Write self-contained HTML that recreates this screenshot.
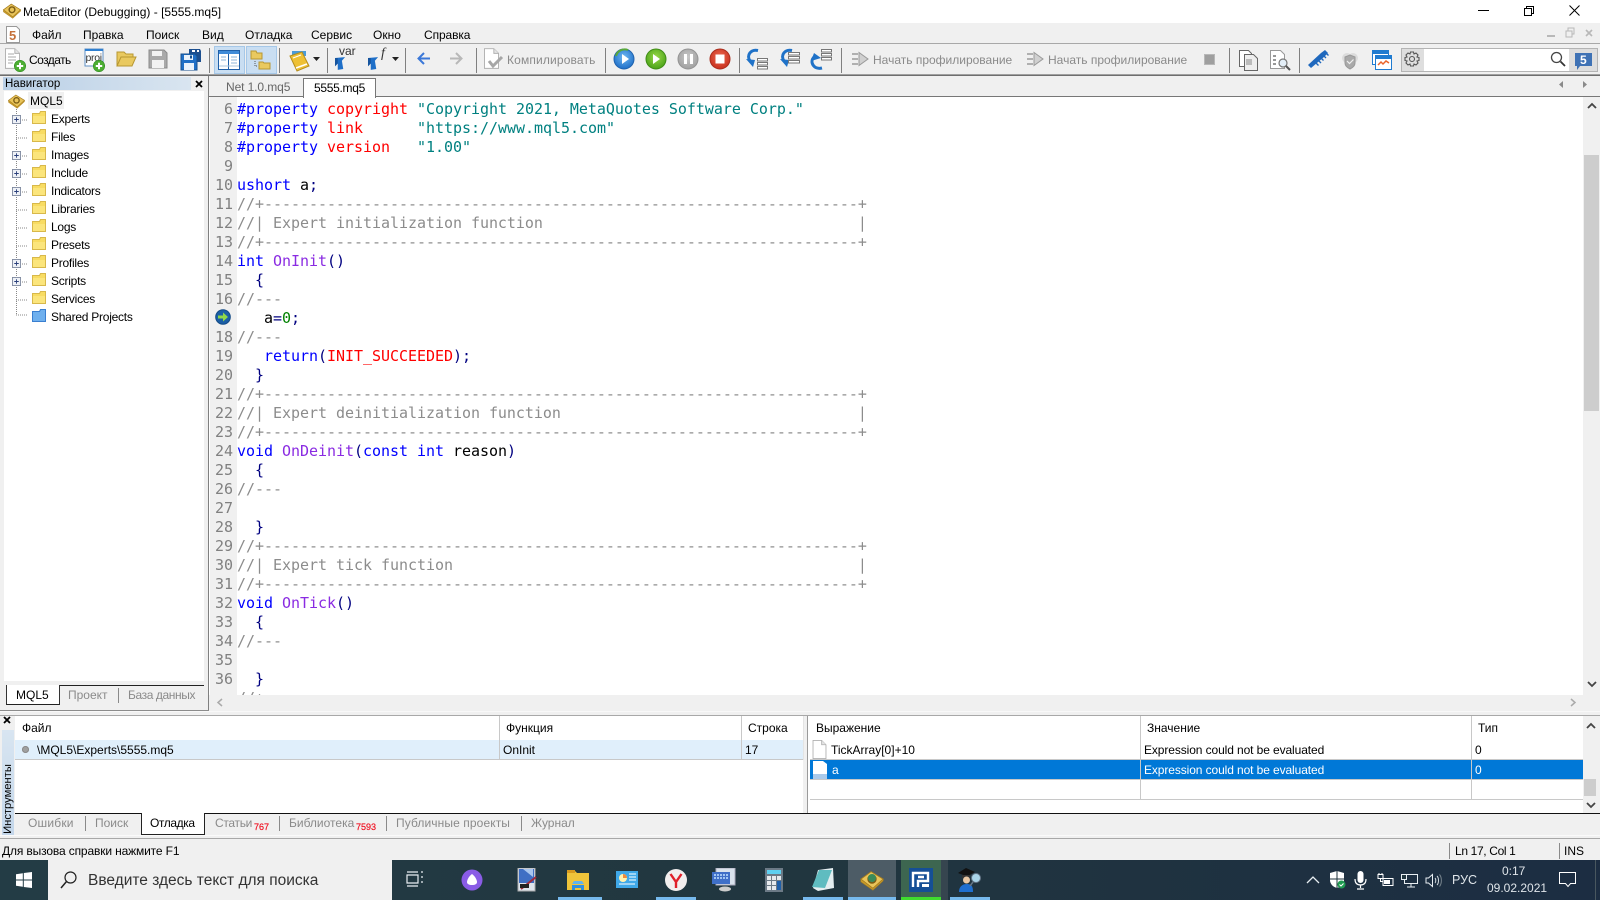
<!DOCTYPE html>
<html lang="ru"><head><meta charset="utf-8"><title>MetaEditor</title>
<style>
html,body{margin:0;padding:0;width:1600px;height:900px;overflow:hidden;background:#f0f0f0}
body{font-family:"Liberation Sans","DejaVu Sans",sans-serif;font-size:12px;color:#000;position:relative}
.a,.t,svg.i{position:absolute}
.t{white-space:pre;line-height:16px;height:16px}
.g{color:#8a8a8a}
.tr{letter-spacing:-.25px}
.sep{position:absolute;width:1px;top:48px;height:25px;background:#808080}
.vs{position:absolute;width:1px;height:15px;background:#8a8a8a}
pre{margin:0;font-family:"DejaVu Sans Mono",monospace;font-size:15px;line-height:19px;position:absolute}
.b{color:#0000ff}.r{color:#ff0000}.s{color:#008080}.c{color:#8c8c8c}.p{color:#8a2be2}.n{color:#000080}.z{color:#008000}
.w{color:#fff}
.tb{color:#dfe5ea;font-size:15.5px}
.red{font-size:9px;color:#f01020;-webkit-text-stroke:.2px #f01020}
</style></head><body>
<svg width="0" height="0" style="position:absolute"><defs>
<symbol id="fd" viewBox="0 0 14 13"><path d="M.5 12.500V2.500h7l1-2h5v12z" fill="#f8dc62" stroke="#d8b84a"/><path d="M1 5h12v7H1z" fill="#fbe57c"/></symbol>
<symbol id="pl" viewBox="0 0 10 10"><rect x=".5" y=".5" width="9" height="9" fill="#eef1f6" stroke="#7f8aa0"/><path d="M2.5 5h5M5 2.5v5" stroke="#2a3f7a" stroke-width="1"/></symbol>
<symbol id="plus" viewBox="0 0 12 12"><circle cx="6" cy="6" r="5.7" fill="#4cae32" stroke="#2d8a1f" stroke-width=".6"/><path d="M2.8 6h6.4M6 2.8v6.4" stroke="#fff" stroke-width="2"/></symbol>
<symbol id="doc" viewBox="0 0 16 22"><path d="M.5.5h10l5 5v16H.5z" fill="#fff" stroke="#b0b0b0"/><path d="M10.5.5v5h5" fill="#e4e4e4" stroke="#b0b0b0"/></symbol>
<symbol id="prf" viewBox="0 0 17 16"><path d="M0 3h6M0 8h6M0 13h6" stroke="#9a9a9a" stroke-width="1.4"/><path d="M7 1.5v13L16 8z" fill="#d0d0d0" stroke="#9a9a9a"/></symbol>
<symbol id="bk" viewBox="0 0 28 24"><path d="M2 11 13 3l13 8-11 10z" fill="#e9c45a" stroke="#a47c1e"/><path d="M2 11v3l13 9 11-10v-2L15 21z" fill="#c79a2a" stroke="#a47c1e" stroke-width=".6"/><circle cx="14" cy="11" r="4" fill="none" stroke="#7a5c14" stroke-width="2"/></symbol>
<symbol id="ar" viewBox="0 0 12 14"><path d="M0 1 11 0 7.500 4 9 13 3 14V7L0 10z" fill="#1e6fc8"/><path d="M0 1 3 1V14L3 7 0 10z" fill="#15549e"/></symbol>
<radialGradient id="gb" cx=".5" cy=".4" r=".6"><stop offset="0" stop-color="#6fb8f2"/><stop offset="1" stop-color="#1f6fc8"/></radialGradient>
<radialGradient id="gg" cx=".5" cy=".4" r=".6"><stop offset="0" stop-color="#9ad84a"/><stop offset="1" stop-color="#4aa318"/></radialGradient>
<radialGradient id="gs" cx=".5" cy=".4" r=".6"><stop offset="0" stop-color="#c8c8c8"/><stop offset="1" stop-color="#a0a0a0"/></radialGradient>
<radialGradient id="gr" cx=".5" cy=".4" r=".6"><stop offset="0" stop-color="#ec6a50"/><stop offset="1" stop-color="#c8301e"/></radialGradient>
</defs></svg>

<!-- title bar -->
<div class="a" style="left:0;top:0;width:1600px;height:23px;background:#fff"></div>
<svg class="i" style="left:2px;top:1px" width="20" height="19"><use href="#bk" width="20" height="19"/></svg>
<div class="t" style="left:23px;top:4px;font-size:12px">MetaEditor (Debugging) - [5555.mq5]</div>
<svg class="i" style="left:1478px;top:5px" width="110" height="12"><path d="M0 5.5h11" stroke="#000"/><path d="M46.5 3.5h7v7h-7zM48.5 3.5V1.5h7v7h-2" fill="none" stroke="#000"/><path d="M91.5 .5l10 10M101.5 .5l-10 10" stroke="#000"/></svg>

<!-- menu -->
<div class="a" style="left:0;top:23px;width:1600px;height:20px;background:#f0f0f0"></div>
<svg class="i" style="left:6px;top:26px" width="14" height="17"><path d="M.5.5h10l3 3v13H.5z" fill="#fff" stroke="#999"/><text x="3" y="14" font-family="Liberation Sans" font-weight="700" font-size="13" fill="#c5713a">5</text></svg>
<div class="t" style="left:32px;top:27px">Файл</div>
<div class="t" style="left:83px;top:27px">Правка</div>
<div class="t" style="left:146px;top:27px">Поиск</div>
<div class="t" style="left:202px;top:27px">Вид</div>
<div class="t" style="left:245px;top:27px">Отладка</div>
<div class="t" style="left:311px;top:27px">Сервис</div>
<div class="t" style="left:373px;top:27px">Окно</div>
<div class="t" style="left:424px;top:27px;letter-spacing:-.1px">Справка</div>
<svg class="i" style="left:1546px;top:27px" width="50" height="12"><path d="M1 9h8" stroke="#b8b8b8" stroke-width="2"/><path d="M20 4h6v6h-6zM22 4V1h6v6h-2" fill="none" stroke="#b8b8b8"/><path d="M40 3l6 6M46 3l-6 6" stroke="#b8b8b8" stroke-width="1.6"/></svg>
<div class="a" style="left:0;top:43px;width:1600px;height:1px;background:#a8a8a8"></div>

<!-- toolbar -->
<svg class="i" style="left:5px;top:48px" width="22" height="24"><use href="#doc" width="15" height="21"/><path d="M3 6h6M3 9h8M3 12h8M3 15h5" stroke="#aaa"/><use href="#plus" x="9" y="12" width="12" height="12"/></svg>
<div class="t" style="left:29px;top:52px;letter-spacing:-.55px">Создать</div>
<svg class="i" style="left:84px;top:48px" width="22" height="24"><path d="M1 1h18v17H1z" fill="#fff" stroke="#5f8fc4"/><path d="M1 1h18v2H1z" fill="#2f7fd0"/><text x="1.5" y="13" font-family="Liberation Sans" font-size="10.5" letter-spacing="-.3" fill="#333">proj</text><use href="#plus" x="9" y="12" width="12" height="12"/></svg>
<svg class="i" style="left:116px;top:49px" width="21" height="19"><path d="M1 17V3h7l2 2h7v3H5L1 17h15l4-9H5" fill="#e9c95f" stroke="#b79732"/></svg>
<svg class="i" style="left:148px;top:49px" width="20" height="20"><path d="M1 1h15l3 3v15H1z" fill="#a9a9a9" stroke="#8a8a8a"/><path d="M4 2h10v5H4zM4 11h12v8H4z" fill="#f2f2f2"/></svg>
<svg class="i" style="left:180px;top:48px" width="22" height="23"><path d="M9 1h11l1 2v11H9z" fill="#1c4f8f"/><path d="M12 2h3v2h-3zM17 2h2v2h-2z" fill="#fff"/><path d="M1 6h14l2 2v14H1z" fill="#1f6fc6" stroke="#17518f"/><path d="M4 7h9v5H4zM4 15h10v7H4z" fill="#e9f2fb"/><path d="M10 7.5h2v3h-2z" fill="#17518f"/></svg>
<div class="sep" style="left:209px"></div>
<div class="a" style="left:214px;top:46px;width:29px;height:26px;background:#c9def2;border:1px solid #a6c8e8"></div>
<svg class="i" style="left:218px;top:50px" width="22" height="20"><path d="M.5.5h21v19H.5z" fill="#fff" stroke="#1f5fa8"/><path d="M1 1h20v3H1z" fill="#3f8bd8"/><path d="M10.500 4v15" stroke="#1f5fa8"/><path d="M3 7h5M3 10h5M13 7h6M13 10h6M13 13h6" stroke="#8fb4d8"/><path d="M1 16h20" stroke="#a8c4de"/></svg>
<div class="a" style="left:246px;top:46px;width:29px;height:26px;background:#c9def2;border:1px solid #a6c8e8"></div>
<svg class="i" style="left:250px;top:50px" width="22" height="21"><path d="M1 9V1h5l1 2h5v6z" fill="#e9c95f" stroke="#b79732"/><path d="M9 19v-7h4l1 1h6v6z" fill="#e9c95f" stroke="#b79732"/><path d="M5 11v5h3" stroke="#555" stroke-dasharray="1 1" fill="none"/></svg>
<div class="sep" style="left:279px"></div>
<svg class="i" style="left:288px;top:48px" width="22" height="24"><path d="M4 3h14v5H4z" fill="#4a9bd8"/><path d="M2 8 14 4l7 14-12 5z" fill="#eec034" stroke="#b58d1c"/><path d="M5 10l8-3" stroke="#fff"/><path d="M8 20l11-4" stroke="#fff" stroke-width="1.500"/></svg>
<svg class="i" style="left:313px;top:57px" width="8" height="5"><path d="M0 0h7L3.500 4z" fill="#222"/></svg>
<div class="sep" style="left:327px"></div>
<svg class="i" style="left:335px;top:57px" width="11" height="13"><use href="#ar" width="11" height="13"/></svg>
<div class="t" style="left:339px;top:43px;color:#333;font-size:12px">var</div>
<svg class="i" style="left:368px;top:57px" width="11" height="13"><use href="#ar" width="11" height="13"/></svg>
<div class="t" style="left:381px;top:46px;color:#333;font-style:italic;font-family:'Liberation Serif',serif;font-size:14px">f</div>
<svg class="i" style="left:392px;top:57px" width="8" height="5"><path d="M0 0h7L3.500 4z" fill="#222"/></svg>
<div class="sep" style="left:405px"></div>
<svg class="i" style="left:417px;top:52px" width="14" height="13"><path d="M7 1 1.500 6.500 7 12M2 6.500h11" fill="none" stroke="#3b78d8" stroke-width="2"/></svg>
<svg class="i" style="left:449px;top:52px" width="14" height="13"><path d="M7 1l5.500 5.500L7 12M12 6.500H1" fill="none" stroke="#b8b8b8" stroke-width="2"/></svg>
<div class="sep" style="left:476px"></div>
<svg class="i" style="left:484px;top:48px" width="21" height="24"><use href="#doc" width="15" height="21"/><path d="M5 13l4 5 9-9" fill="none" stroke="#a6a6a6" stroke-width="3"/></svg>
<div class="t g" style="left:507px;top:52px;letter-spacing:.15px">Компилировать</div>
<div class="sep" style="left:605px"></div>
<svg class="i" style="left:612px;top:47px" width="120" height="24">
<circle cx="12" cy="12" r="10" fill="url(#gb)" stroke="#1f62ad" stroke-width="1"/><path d="M10 7v10l7-5z" fill="#fff"/><path d="M4 9a9 9 0 0 1 12-6" fill="none" stroke="#59a83a" stroke-width="2"/>
<circle cx="44" cy="12" r="10" fill="url(#gg)" stroke="#3f8b16" stroke-width="1"/><path d="M41 7v10l7-5z" fill="#fff"/>
<circle cx="76" cy="12" r="10" fill="url(#gs)" stroke="#939393" stroke-width="1"/><path d="M72 7h3v10h-3zM78 7h3v10h-3z" fill="#fff"/>
<circle cx="108" cy="12" r="10" fill="url(#gr)" stroke="#a82e1e" stroke-width="1"/><path d="M103.500 7.500h9v9h-9z" fill="#fff"/></svg>
<div class="sep" style="left:739px"></div>
<svg class="i" style="left:746px;top:48px" width="90" height="24">
<path d="M12 2.500C5 1 0 7 4 13" fill="none" stroke="#1f72c8" stroke-width="3"/><path d="M0 11l9 1-2 7z" fill="#1f72c8"/><path d="M11.500 10.500h10v2.500h-10zM11.500 14.500h10v2.500h-10zM11.500 18.500h10v2.500h-10z" fill="#fff" stroke="#777"/>
<path d="M46 2.500C39 1 34 7 38 13" fill="none" stroke="#1f72c8" stroke-width="3"/><path d="M34 11l9 1-2 7z" fill="#1f72c8"/><path d="M42.500 4.500h11V7h-11zM42.500 8.500h11V11h-11zM42.500 12.500h11V15h-11z" fill="#fff" stroke="#777"/>
<path d="M76 20C68 22 63 14 68 9" fill="none" stroke="#1f72c8" stroke-width="3"/><path d="M65 13l3-8 7 5z" fill="#1f72c8"/><path d="M75.500 1.500h10V4h-10zM75.500 5.500h10V8h-10zM75.500 9.500h10V12h-10z" fill="#fff" stroke="#777"/></svg>
<div class="sep" style="left:841px"></div>
<svg class="i" style="left:852px;top:51px" width="17" height="16"><use href="#prf" width="17" height="16"/></svg>
<div class="t g" style="left:873px;top:52px">Начать профилирование</div>
<svg class="i" style="left:1027px;top:51px" width="17" height="16"><use href="#prf" width="17" height="16"/></svg>
<div class="t g" style="left:1048px;top:52px">Начать профилирование</div>
<div class="a" style="left:1204px;top:54px;width:9px;height:9px;background:#9f9f9f;border:1px solid #b8b8b8"></div>
<div class="sep" style="left:1229px"></div>
<svg class="i" style="left:1239px;top:50px" width="20" height="21"><path d="M.5.5h9l3 3v13H.5z" fill="#fff" stroke="#666"/><path d="M5.500 4.500h9l4 4v12h-13z" fill="#eee" stroke="#666"/><path d="M7 9h6v6H7z" fill="#bbb"/></svg>
<svg class="i" style="left:1270px;top:50px" width="21" height="21"><path d="M.5.500h10l4 4v14H.5z" fill="#fff" stroke="#999"/><path d="M3 6h3M3 10h3M3 14h3" stroke="#777" stroke-width="1.500"/><circle cx="13" cy="13" r="4" fill="#e3eef7" stroke="#777" stroke-width="1.200"/><path d="M16 16l4 4" stroke="#555" stroke-width="2"/></svg>
<div class="sep" style="left:1299px"></div>
<svg class="i" style="left:1308px;top:50px" width="22" height="18"><path d="M0 15 13 3l4-3 3 3-4 4L3 18z" fill="#1f68bd"/><path d="M8 13l2.500 2.500M10.500 10.500l2.500 2.500M13 8l2.500 2.500M15.500 5.500 18 8M18 3l2.500 2.500" stroke="#1f68bd" stroke-width="1.400"/></svg>
<svg class="i" style="left:1340px;top:50px" width="20" height="20"><circle cx="7" cy="8" r="5" fill="#dcdcdc"/><circle cx="13" cy="8" r="5" fill="#dcdcdc"/><path d="M5 7l5-2 5 2v6c0 3-3 5-5 6-2-1-5-3-5-6z" fill="#aaa" stroke="#999"/><path d="M7 11l2.500 2.500 4-4" fill="none" stroke="#f0f0f0" stroke-width="1.200"/></svg>
<svg class="i" style="left:1372px;top:50px" width="20" height="20"><path d="M.5 .5h16v14H.5z" fill="#fff" stroke="#1f7bd0"/><path d="M1 1h15v3H1z" fill="#1f7bd0"/><path d="M3.500 5.500h16v14h-16z" fill="#fff" stroke="#1f7bd0"/><path d="M4 6h15v3H4z" fill="#1f7bd0"/><path d="M6 15l3-3 2 2 3-3 3 2" fill="none" stroke="#e9642a" stroke-width="1.500"/></svg>
<div class="a" style="left:1401px;top:48px;width:195px;height:22px;border:1px solid #b4b4b4;background:#fff"></div>
<div class="a" style="left:1402px;top:49px;width:22px;height:22px;background:#dedede"></div>
<svg class="i" style="left:1404px;top:51px" width="16" height="16"><path d="M6.500 1h3l.5 2 2-1 2 2-1 2 2 .5v3l-2 .5 1 2-2 2-2-1-.5 2h-3l-.5-2-2 1-2-2 1-2-2-.5v-3l2-.5-1-2 2-2 2 1z" fill="none" stroke="#555" stroke-width="1.100"/><circle cx="8" cy="8" r="2.500" fill="none" stroke="#555" stroke-width="1.100"/></svg>
<svg class="i" style="left:1550px;top:51px" width="16" height="16"><circle cx="6.500" cy="6.500" r="5" fill="none" stroke="#444" stroke-width="1.300"/><path d="M10.500 10.500l4.500 4.500" stroke="#333" stroke-width="1.800"/></svg>
<div class="a" style="left:1569px;top:49px;width:28px;height:22px;background:#dedede"></div>
<svg class="i" style="left:1574px;top:52px" width="20" height="19"><path d="M1 1h17v13H6l-3 4v-4H1z" fill="#3f72b5"/><text x="6" y="12" font-family="Liberation Sans" font-weight="700" font-size="12" fill="#fff">5</text></svg>
<div class="a" style="left:0;top:75px;width:1600px;height:1px;background:#6e6e6e"></div>
<div class="a" style="left:0;top:74px;width:1600px;height:1px;background:#a0a0a0"></div>

<!-- navigator -->
<div class="a" style="left:0;top:76px;width:208px;height:634px;background:#f0f0f0"></div>
<div class="a" style="left:3px;top:77px;width:188px;height:13px;background:linear-gradient(90deg,#b9cfe6,#d9e5f0)"></div>
<div class="t" style="left:5px;top:76px;font-size:11.500px">Навигатор</div>
<svg class="i" style="left:195px;top:80px" width="8" height="8"><path d="M1 1l6 6M7 1l-6 6" stroke="#000" stroke-width="1.800"/></svg>
<div class="a" style="left:4px;top:91px;width:200px;height:590px;background:#fff"></div>
<svg class="i" style="left:7px;top:93px" width="19" height="16"><use href="#bk" width="19" height="16"/></svg>
<div class="a" style="left:28px;top:92px;width:36px;height:17px;background:#f0f0f0"></div>
<div class="t" style="left:30px;top:93px">MQL5</div>
<svg class="i" style="left:11px;top:108px" width="30" height="216">
<path d="M5.500 1v206" stroke="#888" stroke-dasharray="1 1"/>
<g stroke="#888" stroke-dasharray="1 1"><path d="M5 12h11M5 30h11M5 48h11M5 66h11M5 84h11M5 102h11M5 120h11M5 138h11M5 156h11M5 174h11M5 192h11M5 207h11" transform="translate(0,0)"/></g>
<use href="#pl" x="1" y="7" width="9" height="9"/><use href="#pl" x="1" y="43" width="9" height="9"/><use href="#pl" x="1" y="61" width="9" height="9"/><use href="#pl" x="1" y="79" width="9" height="9"/><use href="#pl" x="1" y="151" width="9" height="9"/><use href="#pl" x="1" y="169" width="9" height="9"/>
</svg>
<svg class="i" style="left:32px;top:111px" width="14" height="212">
<use href="#fd" y="0" width="14" height="13"/><use href="#fd" y="18" width="14" height="13"/><use href="#fd" y="36" width="14" height="13"/><use href="#fd" y="54" width="14" height="13"/><use href="#fd" y="72" width="14" height="13"/><use href="#fd" y="90" width="14" height="13"/><use href="#fd" y="108" width="14" height="13"/><use href="#fd" y="126" width="14" height="13"/><use href="#fd" y="144" width="14" height="13"/><use href="#fd" y="162" width="14" height="13"/><use href="#fd" y="180" width="14" height="13"/>
<path d="M.5 210.500V200.500h7l1-2h5v12z" fill="#6fb0ee" stroke="#3a7fd0"/></svg>
<div class="t tr" style="left:51px;top:111px">Experts</div>
<div class="t tr" style="left:51px;top:129px">Files</div>
<div class="t tr" style="left:51px;top:147px">Images</div>
<div class="t tr" style="left:51px;top:165px">Include</div>
<div class="t tr" style="left:51px;top:183px">Indicators</div>
<div class="t tr" style="left:51px;top:201px">Libraries</div>
<div class="t tr" style="left:51px;top:219px">Logs</div>
<div class="t tr" style="left:51px;top:237px">Presets</div>
<div class="t tr" style="left:51px;top:255px">Profiles</div>
<div class="t tr" style="left:51px;top:273px">Scripts</div>
<div class="t tr" style="left:51px;top:291px">Services</div>
<div class="t tr" style="left:51px;top:309px">Shared Projects</div>
<div class="a" style="left:4px;top:681px;width:200px;height:27px;background:#f0f0f0"></div>
<div class="a" style="left:6px;top:685px;width:198px;height:1px;background:#222"></div>
<div class="a" style="left:6px;top:685px;width:52px;height:19px;background:#fff;border-left:1px solid #333;border-right:1px solid #333;border-bottom:1px solid #222"></div>
<div class="t" style="left:16px;top:687px">MQL5</div>
<div class="t g" style="left:68px;top:687px">Проект</div>
<div class="vs" style="left:118px;top:688px"></div>
<div class="t g" style="left:128px;top:687px;letter-spacing:-.4px">База данных</div>
<div class="a" style="left:208px;top:76px;width:1px;height:634px;background:#808080"></div>
<div class="a" style="left:0;top:710px;width:209px;height:1px;background:#8c8c8c"></div>

<!-- tabs -->
<div class="t g" style="left:226px;top:79px;color:#666;letter-spacing:-.1px">Net 1.0.mq5</div>
<div class="a" style="left:303px;top:78px;width:71px;height:19px;background:#fff;border:1px solid #777;border-bottom:none;z-index:3"></div>
<div class="t" style="left:314px;top:80px;z-index:4;letter-spacing:-.3px">5555.mq5</div>
<div class="a" style="left:209px;top:96px;width:1391px;height:1px;background:#777"></div>
<svg class="i" style="left:1558px;top:81px" width="34" height="8"><path d="M5 0v7L1 3.500z" fill="#8a8a8a"/><path d="M25 0v7l4-3.500z" fill="#8a8a8a"/></svg>

<!-- editor -->
<div class="a" style="left:209px;top:97px;width:1374px;height:598px;background:#fff;overflow:hidden">
<div class="a" style="left:1px;top:0;width:27px;height:598px;background:#f0f0f0"></div>
<pre class="g" style="left:0;top:3px;width:24px;text-align:right;color:#808080">6
7
8
9
10
11
12
13
14
15
16

18
19
20
21
22
23
24
25
26
27
28
29
30
31
32
33
34
35
36</pre>
<pre style="left:28px;top:3px;width:1300px;letter-spacing:-.033px"><span class="b">#property</span> <span class="r">copyright</span> <span class="s">"Copyright 2021, MetaQuotes Software Corp."</span>
<span class="b">#property</span> <span class="r">link</span>      <span class="s">"https://www.mql5.com"</span>
<span class="b">#property</span> <span class="r">version</span>   <span class="s">"1.00"</span>

<span class="b">ushort</span> a<span class="n">;</span>
<span class="c">//+------------------------------------------------------------------+</span>
<span class="c">//| Expert initialization function                                   |</span>
<span class="c">//+------------------------------------------------------------------+</span>
<span class="b">int</span> <span class="p">OnInit</span><span class="n">()</span>
  <span class="n">{</span>
<span class="c">//---</span>
   a<span class="n">=</span><span class="z">0</span><span class="n">;</span>
<span class="c">//---</span>
   <span class="b">return</span><span class="n">(</span><span class="r">INIT_SUCCEEDED</span><span class="n">);</span>
  <span class="n">}</span>
<span class="c">//+------------------------------------------------------------------+</span>
<span class="c">//| Expert deinitialization function                                 |</span>
<span class="c">//+------------------------------------------------------------------+</span>
<span class="b">void</span> <span class="p">OnDeinit</span><span class="n">(</span><span class="b">const</span> <span class="b">int</span> reason<span class="n">)</span>
  <span class="n">{</span>
<span class="c">//---</span>

  <span class="n">}</span>
<span class="c">//+------------------------------------------------------------------+</span>
<span class="c">//| Expert tick function                                             |</span>
<span class="c">//+------------------------------------------------------------------+</span>
<span class="b">void</span> <span class="p">OnTick</span><span class="n">()</span>
  <span class="n">{</span>
<span class="c">//---</span>

  <span class="n">}</span>
<span class="c">//+-</span></pre>
<svg class="i" style="left:6px;top:212px" width="16" height="16"><circle cx="8" cy="8" r="7.300" fill="#1b5ea6" stroke="#124a85"/><path d="M3 6.500h5V3.500l5 4.500-5 4.500V9.500H3z" fill="#8fd84a"/></svg>
</div>
<!-- editor scrollbar -->
<div class="a" style="left:1583px;top:97px;width:17px;height:598px;background:#f0f0f0"></div>
<div class="a" style="left:1584px;top:155px;width:15px;height:256px;background:#cdcdcd"></div>
<svg class="i" style="left:1587px;top:102px" width="10" height="7"><path d="M1 6l4-4 4 4" fill="none" stroke="#444" stroke-width="1.800"/></svg>
<svg class="i" style="left:1587px;top:681px" width="10" height="7"><path d="M1 1l4 4 4-4" fill="none" stroke="#444" stroke-width="1.800"/></svg>
<div class="a" style="left:209px;top:695px;width:1391px;height:15px;background:#f0f0f0"></div>
<svg class="i" style="left:216px;top:698px" width="8" height="9"><path d="M6 1L2 4.500 6 8" fill="none" stroke="#aaa" stroke-width="1.500"/></svg>
<svg class="i" style="left:1569px;top:698px" width="8" height="9"><path d="M2 1l4 3.500L2 8" fill="none" stroke="#aaa" stroke-width="1.500"/></svg>

<!-- bottom panel -->
<div class="a" style="left:0;top:711px;width:1600px;height:1px;background:#f8f8f8"></div>
<div class="a" style="left:0;top:715px;width:1600px;height:1px;background:#a8a8a8"></div>
<svg class="i" style="left:3px;top:716px" width="8" height="8"><path d="M1 1l6 6M7 1l-6 6" stroke="#000" stroke-width="1.800"/></svg>
<div class="a" style="left:2px;top:730px;width:12px;height:105px;background:linear-gradient(0deg,#c3d6ea,#d8e5f1)"></div>
<div class="t" style="left:-34px;top:791px;width:84px;font-size:11.200px;transform:rotate(-90deg);transform-origin:center;text-align:center">Инструменты</div>
<div class="a" style="left:15px;top:716px;width:788px;height:97px;background:#fff"></div>
<div class="t" style="left:22px;top:720px">Файл</div>
<div class="t" style="left:506px;top:720px">Функция</div>
<div class="t" style="left:748px;top:720px">Строка</div>
<div class="a" style="left:15px;top:740px;width:789px;height:19px;background:#e0effb"></div>
<div class="a" style="left:15px;top:759px;width:789px;height:1px;background:#c8c8c8"></div>
<div class="a" style="left:499px;top:716px;width:1px;height:44px;background:#c8c8c8"></div>
<div class="a" style="left:741px;top:716px;width:1px;height:44px;background:#c8c8c8"></div>
<div class="a" style="left:803px;top:716px;width:1px;height:44px;background:#e4e4e4"></div>
<div class="a" style="left:22px;top:746px;width:7px;height:7px;border-radius:50%;background:#a0a0a0;box-shadow:inset 0 0 0 1px #8a8a8a"></div>
<div class="t" style="left:37px;top:742px">\MQL5\Experts\5555.mq5</div>
<div class="t" style="left:503px;top:742px">OnInit</div>
<div class="t" style="left:745px;top:742px">17</div>
<div class="a" style="left:807px;top:716px;width:1px;height:97px;background:#9a9a9a"></div>
<div class="a" style="left:808px;top:716px;width:792px;height:97px;background:#fff"></div>
<div class="t" style="left:816px;top:720px">Выражение</div>
<div class="t" style="left:1147px;top:720px">Значение</div>
<div class="t" style="left:1478px;top:720px">Тип</div>
<div class="a" style="left:810px;top:759px;width:773px;height:20px;background:#0078d7"></div>
<div class="a" style="left:810px;top:759px;width:773px;height:1px;background:#c8c8c8"></div>
<div class="a" style="left:810px;top:779px;width:773px;height:1px;background:#c8c8c8"></div>
<div class="a" style="left:810px;top:799px;width:773px;height:1px;background:#c8c8c8"></div>
<div class="a" style="left:1140px;top:716px;width:1px;height:84px;background:#c8c8c8"></div>
<div class="a" style="left:1471px;top:716px;width:1px;height:84px;background:#c8c8c8"></div>
<svg class="i" style="left:812px;top:740px" width="16" height="40"><use href="#doc" width="15" height="19"/><path d="M1 21h10l4 3v15H1z" fill="#fff"/><path d="M1 34h14v5H1z" fill="#a9c9ea"/></svg>
<div class="t" style="left:831px;top:742px">TickArray[0]+10</div>
<div class="t" style="left:1144px;top:742px;letter-spacing:-.1px">Expression could not be evaluated</div>
<div class="t" style="left:1475px;top:742px">0</div>
<div class="t w" style="left:832px;top:762px">a</div>
<div class="t w" style="left:1144px;top:762px;letter-spacing:-.1px">Expression could not be evaluated</div>
<div class="t w" style="left:1475px;top:762px">0</div>
<div class="a" style="left:1583px;top:716px;width:17px;height:97px;background:#f0f0f0"></div>
<div class="a" style="left:1584px;top:779px;width:12px;height:17px;background:#cdcdcd"></div>
<svg class="i" style="left:1586px;top:722px" width="10" height="7"><path d="M1 6l4-4 4 4" fill="none" stroke="#444" stroke-width="1.800"/></svg>
<svg class="i" style="left:1586px;top:802px" width="10" height="7"><path d="M1 1l4 4 4-4" fill="none" stroke="#444" stroke-width="1.800"/></svg>
<div class="a" style="left:15px;top:813px;width:1585px;height:1px;background:#111"></div>
<div class="a" style="left:141px;top:813px;width:62px;height:21px;background:#fff;border-left:1px solid #222;border-right:1px solid #222;border-bottom:1px solid #222"></div>
<div class="t g" style="left:28px;top:815px;letter-spacing:.2px">Ошибки</div>
<div class="vs" style="left:85px;top:816px"></div>
<div class="t g" style="left:95px;top:815px">Поиск</div>
<div class="t" style="left:150px;top:815px;letter-spacing:-.4px">Отладка</div>
<div class="t g" style="left:215px;top:815px;letter-spacing:-.3px">Статьи</div>
<div class="t red" style="left:254px;top:819px">767</div>
<div class="vs" style="left:279px;top:816px"></div>
<div class="t g" style="left:289px;top:815px">Библиотека</div>
<div class="t red" style="left:356px;top:819px">7593</div>
<div class="vs" style="left:386px;top:816px"></div>
<div class="t g" style="left:396px;top:815px;letter-spacing:.1px">Публичные проекты</div>
<div class="vs" style="left:521px;top:816px"></div>
<div class="t g" style="left:531px;top:815px">Журнал</div>
<div class="a" style="left:0;top:835px;width:1600px;height:1px;background:#fafafa"></div>
<div class="a" style="left:0;top:838px;width:1600px;height:1px;background:#a8a8a8"></div>

<!-- status -->
<div class="t" style="left:2px;top:843px;letter-spacing:-.14px">Для вызова справки нажмите F1</div>
<div class="a" style="left:1449px;top:843px;width:1px;height:16px;background:#8a8a8a"></div>
<div class="t" style="left:1455px;top:843px;letter-spacing:-.35px">Ln 17, Col 1</div>
<div class="a" style="left:1559px;top:843px;width:1px;height:16px;background:#8a8a8a"></div>
<div class="t" style="left:1564px;top:843px">INS</div>

<!-- taskbar -->
<div class="a" style="left:0;top:860px;width:1600px;height:40px;background:linear-gradient(90deg,#233c45,#21363f 50%,#1c2d42)"></div>
<svg class="i" style="left:16px;top:872px" width="16" height="16"><path d="M0 2.200 6.800 1.200V7.500H0zM7.800 1 16 0V7.500H7.800zM0 8.500H6.800V14.800L0 13.800zM7.800 8.500H16V16L7.800 15z" fill="#fff"/></svg>
<div class="a" style="left:48px;top:860px;width:344px;height:40px;background:#f0f0f0"></div>
<svg class="i" style="left:60px;top:871px" width="17" height="18"><circle cx="10.500" cy="6.500" r="5.500" fill="none" stroke="#222" stroke-width="1.200"/><path d="M6.500 10.500 1 17" stroke="#222" stroke-width="1.500"/></svg>
<div class="t" style="left:88px;top:872px;font-size:15.500px;color:#333;line-height:18px;height:18px">Введите здесь текст для поиска</div>
<svg class="i" style="left:406px;top:871px" width="18" height="18"><path d="M1 4h11v8H1zM1 1h11M1 15h11M15 1h2M15 6h2M15 11h2" fill="none" stroke="#e8eef2" stroke-width="1.200"/></svg>
<svg class="i" style="left:461px;top:869px" width="22" height="22"><circle cx="11" cy="11" r="10.500" fill="#8a5ce6"/><path d="M11 5c3 2 5 6 5 8s-2 3-5 3-5-1-5-3 2-6 5-8z" fill="#fff"/></svg>
<svg class="i" style="left:517px;top:868px" width="20" height="24"><path d="M1 0h17v23H1z" fill="#dfe6ee" stroke="#aaa"/><path d="M2 1h15v14H2z" fill="#3f6fc4"/><path d="M6 1l10 8v-8z" fill="#a9c6ee"/><path d="M4 21 19 9" stroke="#a02a3a" stroke-width="2"/><path d="M3 16h9v4H3z" fill="#222"/></svg>
<div class="a" style="left:558px;top:897px;width:44px;height:3px;background:#76b9ed"></div>
<svg class="i" style="left:567px;top:870px" width="22" height="20"><path d="M0 1h8l2 2h12v17H0z" fill="#f0c43a"/><path d="M0 0h8v3H0z" fill="#d99a1e"/><path d="M5 15h12v5h-3v-2H8v2H5z" fill="#2f8fe0"/><path d="M5 14l2-3h8l2 3z" fill="#5fb3ee"/></svg>
<svg class="i" style="left:616px;top:871px" width="22" height="17"><path d="M0 0h22v17H0z" fill="#3fa8e8"/><circle cx="7" cy="7" r="4" fill="#fff2b0"/><path d="M7 7V3a4 4 0 0 1 4 4z" fill="#f08a3a"/><path d="M13 3h7M13 6h7M13 9h7M3 13h16" stroke="#fff"/></svg>
<div class="a" style="left:656px;top:897px;width:40px;height:3px;background:#76b9ed"></div>
<svg class="i" style="left:665px;top:869px" width="22" height="22"><circle cx="11" cy="11" r="11" fill="#f2eeee"/><path d="M5.500 5l5.500 8v6M16.500 5 11 13" fill="none" stroke="#e0202a" stroke-width="2.400"/></svg>
<svg class="i" style="left:712px;top:868px" width="24" height="24"><path d="M4 0h19v17H4z" fill="#d9e2ec" stroke="#aab"/><path d="M0 4h18v12H0z" fill="#3f6fc8"/><path d="M2 7h14M2 10h14" stroke="#bfe0ff" stroke-width="1.500" stroke-dasharray="2 1"/><ellipse cx="13" cy="21" rx="6" ry="2.500" fill="#ccc"/></svg>
<svg class="i" style="left:765px;top:868px" width="18" height="24"><path d="M0 0h18v24H0z" fill="#6c7a86"/><path d="M2 2h14v4H2z" fill="#5ed0f0"/><path d="M2 8h4v4H2zM7 8h4v4H7zM12 8h4v4h-4zM2 13h4v4H2zM7 13h4v4H7zM2 18h4v4H2zM7 18h4v4H7z" fill="#e6eaed"/><path d="M12 13h4v9h-4z" fill="#1f5fa8"/></svg>
<svg class="i" style="left:811px;top:868px" width="24" height="24"><path d="M7 2 22 0l1 20-16 3-5-3z" fill="#e4eef0"/><path d="M8 2 1 19l13 1 7-18z" fill="#5fbcc0"/></svg>
<div class="a" style="left:803px;top:897px;width:40px;height:3px;background:#76b9ed"></div>
<div class="a" style="left:848px;top:860px;width:48px;height:40px;background:#4d5c66"></div>
<div class="a" style="left:848px;top:897px;width:48px;height:3px;background:#76b9ed"></div>
<svg class="i" style="left:859px;top:868px" width="26" height="24"><use href="#bk" width="26" height="24"/><circle cx="13" cy="10" r="4" fill="#3a8a5a"/></svg>
<div class="a" style="left:901px;top:860px;width:40px;height:40px;background:#3d6650"></div>
<div class="a" style="left:941px;top:860px;width:7px;height:40px;background:#36454f"></div>
<div class="a" style="left:901px;top:897px;width:40px;height:3px;background:#3fdc2e"></div>
<svg class="i" style="left:909px;top:868px" width="24" height="24"><path d="M0 0h24v24H0z" fill="#154f96"/><path d="M4 19V5h15v8H9v6M9 9h6" fill="none" stroke="#fff" stroke-width="2.400"/><path d="M13 16h7v3h-7z" fill="#fff"/></svg>
<svg class="i" style="left:957px;top:867px" width="26" height="26"><path d="M1 6 9 1l9 4-8 4.500z" fill="#111"/><path d="M5 8v3c2 1 6 1 8-1V8z" fill="#333"/><circle cx="9.500" cy="13" r="3.500" fill="#eac8a4"/><path d="M2 25c0-5 3-8 8-8s6 3 6 8z" fill="#1f6fd0"/><circle cx="19" cy="11" r="4.500" fill="#a9d4e8" stroke="#678"/><path d="M16 15l-3 4" stroke="#678" stroke-width="1.500"/></svg>
<div class="a" style="left:950px;top:897px;width:40px;height:3px;background:#76b9ed"></div>
<svg class="i" style="left:1306px;top:875px" width="14" height="9"><path d="M1 8l6-6 6 6" fill="none" stroke="#e8eef2" stroke-width="1.300"/></svg>
<svg class="i" style="left:1329px;top:871px" width="18" height="19"><path d="M1 2 8 0l7 2v7c0 4-3 7-7 8-4-1-7-4-7-8z" fill="#fff"/><path d="M8 0v17M1 8h14" stroke="#21363f" stroke-width="1"/><circle cx="12.500" cy="13.500" r="4" fill="#1e9a50"/><path d="M10.500 13.500l1.500 1.500 2.500-2.500" fill="none" stroke="#fff"/></svg>
<svg class="i" style="left:1354px;top:871px" width="13" height="19"><rect x="3.500" y="0" width="6" height="12" rx="3" fill="#fff"/><path d="M1 8c0 4 2 6 5.500 6s5.500-2 5.500-6M6.500 14v3M3 18h7" fill="none" stroke="#fff" stroke-width="1.200"/></svg>
<svg class="i" style="left:1377px;top:873px" width="17" height="14"><path d="M6 5.500h10v7H6z" fill="none" stroke="#fff"/><path d="M7 7h6v4H7z" fill="#fff"/><path d="M1 1.500h5v4H1zM2 0v2M5 0v2M3.500 5.500v3H6" fill="none" stroke="#fff"/></svg>
<svg class="i" style="left:1401px;top:873px" width="17" height="15"><path d="M3.500 1.500h13v9h-13zM6 14h8M10 10.500V14" fill="none" stroke="#e8eef2"/><path d="M.5 1.500h5v5h-5z" fill="#21363f" stroke="#e8eef2"/></svg>
<svg class="i" style="left:1425px;top:873px" width="17" height="15"><path d="M1 5v5h2.500l4 3.500v-12L3.500 5z" fill="none" stroke="#e8eef2"/><path d="M10 5c1 1 1 4 0 5M12 3c2 2 2 7 0 9" fill="none" stroke="#e8eef2" opacity=".9"/><path d="M14.500 1.500c2.500 3 2.500 9 0 12" fill="none" stroke="#76838c"/></svg>
<div class="t tb" style="left:1452px;top:872px;font-size:12.500px">РУС</div>
<div class="t tb" style="left:1502px;top:863px;font-size:12px;color:#dfe5ea">0:17</div>
<div class="t tb" style="left:1487px;top:880px;font-size:12px;color:#dfe5ea">09.02.2021</div>
<svg class="i" style="left:1559px;top:872px" width="18" height="16"><path d="M.5.500h16v11h-5l-2.500 3-2.500-3H.5z" fill="none" stroke="#fff"/></svg>
<div class="a" style="left:1595px;top:860px;width:1px;height:40px;background:#49575f"></div>
</body></html>
